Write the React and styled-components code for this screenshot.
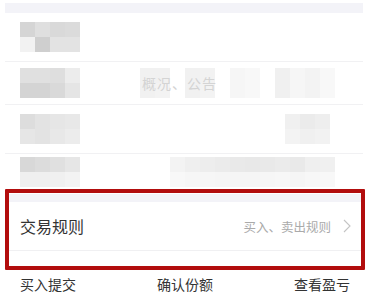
import React from "react";
import styled, { createGlobalStyle } from "styled-components";

const Global = createGlobalStyle`
  html, body { margin: 0; padding: 0; background: #fff; }
  body {
    font-family: "Noto Sans CJK SC", "Noto Sans", sans-serif;
    width: 373px;
    height: 302px;
    overflow: hidden;
  }
`;

const Page = styled.div`
  display: flex;
  flex-direction: column;
  padding-top: 3px;
`;

const List = styled.div`
  margin: 0 10px 0 5px;
  display: flex;
  flex-direction: column;
`;

const Band = styled.div`
  height: ${({ h }) => h}px;
  background: #f3f3f8;
`;

const Row = styled.div`
  height: ${({ h }) => h}px;
  display: flex;
  align-items: center;
  padding: 0 0 0 15px;
  border-bottom: ${({ last }) => (last ? "none" : "1px solid #f1f1f3")};
  position: relative;
`;

const Grid = styled.div`
  display: grid;
  grid-template-columns: repeat(${({ cols }) => cols}, ${({ cell }) => cell}px);
  grid-auto-rows: 15px;
  margin-left: ${({ ml }) => ml || 0}px;
  filter: blur(0.4px);
`;

const Cell = styled.div`
  background: ${({ c }) => c};
`;

const Mosaic = ({ rows, cell = 15, ml }) => (
  <Grid cols={rows[0].length} cell={cell} ml={ml}>
    {rows.flat().map((c, i) => (
      <Cell key={i} c={"#" + c} />
    ))}
  </Grid>
);

const Faint = styled.span`
  position: absolute;
  left: ${({ x }) => x}px;
  top: 50%;
  transform: translateY(-50%);
  font-size: 14px;
  color: #d4d4d4;
  letter-spacing: 1px;
`;

const RuleSection = styled.section`
  position: relative;
  margin: 0 8px 0 5px;
  height: 81px;
  display: flex;
  flex-direction: column;
  padding-top: 5px;
  box-sizing: border-box;
`;

const RuleRow = styled.div`
  height: 48px;
  display: flex;
  align-items: center;
  padding: 0 14px 0 15px;
  border-bottom: 1px solid #f0f0f2;
`;

const Title = styled.span`
  font-size: 16px;
  color: #333;
  flex: 1;
`;

const Hint = styled.span`
  font-size: 12.5px;
  color: #aaa;
  margin-right: 12px;
`;

const Highlight = styled.div`
  position: absolute;
  inset: 0;
  border: 4px solid #b20d0d;
  border-radius: 1px;
  pointer-events: none;
`;

const Steps = styled.nav`
  display: flex;
  justify-content: space-between;
  align-items: center;
  height: 28px;
  padding: 0 23px 0 20px;
  font-size: 14px;
  color: #333;
`;

const Chevron = () => (
  <svg width="8" height="14" viewBox="0 0 8 14">
    <path d="M1 1l6 6-6 6" fill="none" stroke="#c4c4c4" strokeWidth="1.1" />
  </svg>
);

export default function App() {
  return (
    <Page>
      <Global />
      <List>
        <Band h={10} />
        <Row h={48}>
          <Mosaic
            rows={[
              ["d5d5d5", "dfdfdf", "d9d9d9", "dbdbdb"],
              ["f2f2f2", "cfcfcf", "e3e3e3", "e3e3e3"],
            ]}
          />
        </Row>
        <Row h={42}>
          <Mosaic
            rows={[
              ["e0e0e0", "e0e0e0", "dedede", "ececec"],
              ["d4d4d4", "d4d4d4", "d9d9d9", "e5e5e5"],
            ]}
          />
          <Mosaic ml={60} rows={[["f1f1f1", "f1f1f1"], ["f1f1f1", "f3f3f3"]]} />
          <Mosaic ml={15} rows={[["f1f1f1", "f2f2f2"], ["f1f1f1", "f3f3f3"]]} />
          <Mosaic ml={15} rows={[["f6f6f6", "f8f8f8"], ["f6f6f6", "f8f8f8"]]} />
          <Mosaic
            ml={15}
            rows={[
              ["f0f0f0", "f6f6f6", "f3f3f3", "f8f8f8"],
              ["f0f0f0", "f6f6f6", "f3f3f3", "f8f8f8"],
            ]}
          />
          <Faint x={137}>概况、公告</Faint>
        </Row>
        <Row h={48}>
          <Mosaic
            rows={[
              ["dddddd", "e3e3e3", "e6e6e6", "e8e8e8"],
              ["e6e6e6", "e3e3e3", "e8e8e8", "ececec"],
            ]}
          />
          <Mosaic
            ml={205}
            rows={[
              ["f0f0f0", "ebebeb", "eeeeee"],
              ["f3f3f3", "f0f0f0", "f2f2f2"],
            ]}
          />
        </Row>
        <Row h={35} last>
          <Mosaic
            rows={[
              ["d8d8d8", "dcdcdc", "e0e0e0", "e6e6e6"],
              ["efefef", "efefef", "f0f0f0", "f3f3f3"],
            ]}
          />
          <Mosaic
            ml={90}
            rows={[
              ["f3f3f3", "efefef", "ededed", "ebebeb", "e9e9e9", "e8e8e8", "e9e9e9", "ebebeb", "e9e9e9", "efefef", "f0f0f0"],
              ["f8f8f8", "f6f6f6", "f6f6f6", "f5f5f5", "f5f5f5", "f5f5f5", "f6f6f6", "f7f7f7", "f5f5f5", "f7f7f7", "f8f8f8"],
            ]}
          />
        </Row>
      </List>
      <RuleSection>
        <Band h={8} />
        <RuleRow>
          <Title>交易规则</Title>
          <Hint>买入、卖出规则</Hint>
          <Chevron />
        </RuleRow>
        <Highlight />
      </RuleSection>
      <Steps>
        <span>买入提交</span>
        <span>确认份额</span>
        <span>查看盈亏</span>
      </Steps>
    </Page>
  );
}
